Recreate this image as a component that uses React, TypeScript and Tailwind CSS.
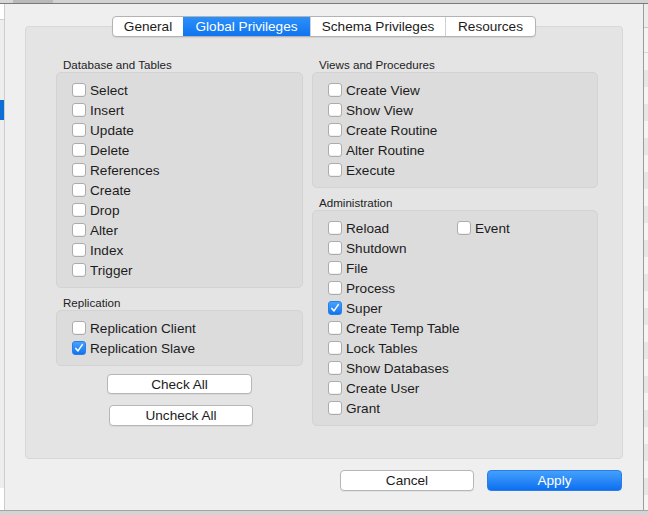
import React from 'react';

const dbTables = ['Select', 'Insert', 'Update', 'Delete', 'References', 'Create', 'Drop', 'Alter', 'Index', 'Trigger'];
const viewsProcs = ['Create View', 'Show View', 'Create Routine', 'Alter Routine', 'Execute'];
const adminLeft = ['Reload', 'Shutdown', 'File', 'Process', 'Super', 'Create Temp Table', 'Lock Tables', 'Show Databases', 'Create User', 'Grant'];

const tabs = [
  { label: 'General', w: 'w-[70px]' },
  { label: 'Global Privileges', w: 'w-[127px]' },
  { label: 'Schema Privileges', w: 'w-[135px]' },
  { label: 'Resources', w: 'w-[90px]' },
];

const CheckBox: React.FC<{ checked?: boolean }> = ({ checked }) =>
  checked ? (
    <span className="flex h-[14px] w-[14px] shrink-0 items-center justify-center rounded-[3px] border border-[#2a7ee8] bg-gradient-to-b from-[#47a2fd] to-[#0f74f0]">
      <svg width="10" height="10" viewBox="0 0 10 10" fill="none">
        <path d="M1.8 5.4 L4 7.9 L8.3 1.6" stroke="white" strokeWidth="1.5" strokeLinecap="round" strokeLinejoin="round" />
      </svg>
    </span>
  ) : (
    <span className="h-[14px] w-[14px] shrink-0 rounded-[3px] border border-[#acacac] bg-white shadow-[inset_0_-1px_0_#f0f0f0]" />
  );

const Item: React.FC<{ label: string; checked?: boolean }> = ({ label, checked }) => (
  <div className="flex h-[20px] items-center gap-[4px] whitespace-nowrap text-[13.6px] text-[#1c1c1c]">
    <CheckBox checked={checked} />
    <span className="mt-[2px] leading-[18px]">{label}</span>
  </div>
);

const Group: React.FC<{ title: string; children: React.ReactNode }> = ({ title, children }) => (
  <div className="flex flex-col">
    <div className="h-[14px] pl-[7px] text-[11.6px] leading-[14px] text-[#222]">{title}</div>
    <div className="rounded-[5px] border border-[#d3d3d3] bg-[#dcdcdc] pb-[7px] pl-[15px] pt-[7px]">{children}</div>
  </div>
);

const PlainButton: React.FC<{ label: string; className?: string }> = ({ label, className }) => (
  <div
    className={`flex h-[20px] items-center justify-center rounded-[4px] border border-[#b6b6b6] bg-white pt-[2px] text-[13.6px] text-[#1c1c1c] shadow-[0_1px_0_rgba(0,0,0,0.05)] ${className ?? ''}`}
  >
    {label}
  </div>
);

export default function App() {
  return (
    <div className="flex h-[515px] w-[648px] flex-col overflow-hidden bg-[#d3d3d3] font-['Liberation_Sans',Arial,sans-serif]">
      {/* window title area behind the sheet */}
      <div className="flex h-[3px] shrink-0">
        <div className="w-[13px] bg-[#d6d6d6]" />
        <div className="w-[40px] bg-[#b9b9b9]" />
        <div className="flex-1 bg-[#d2d2d2]" />
      </div>
      <div className="h-px shrink-0 bg-[#7a7a7a]" />

      <div className="flex h-[506px] shrink-0">
        {/* left edge of the window behind */}
        <div className="flex w-[4px] shrink-0 flex-col bg-[#ededed]">
          <div className="h-[16px] border-b border-[#d0d0d0] bg-white" />
          <div className="h-[80px]" />
          <div className="h-[20px] bg-[#0f6dd6]" />
          <div className="flex-1" />
          <div className="h-[22px] bg-white" />
        </div>

        {/* sheet */}
        <div className="flex w-[640px] shrink-0 flex-col border-l border-r border-l-[#cdcdcd] border-r-[#9c9c9c] bg-[#efefef] px-[20px] pt-[22px]">
          <div className="flex h-[433px] flex-col rounded-[4px] border border-[#d8d8d8] bg-[#e4e4e4]">
            <div className="-mt-[11px] flex justify-center">
              <div className="flex h-[21px] overflow-hidden rounded-[4px] border border-[#b3b3b3] bg-white shadow-[0_1px_1px_rgba(0,0,0,0.08)]">
                {tabs.map((t, i) => (
                  <div
                    key={t.label}
                    className={`flex items-center justify-center pt-[2px] text-[13.6px] ${t.w} ${
                      i === 1
                        ? 'bg-gradient-to-b from-[#2b90f9] to-[#0f74ee] text-white'
                        : 'text-[#1c1c1c]'
                    } ${i > 1 ? 'border-l border-[#d0d0d0]' : ''}`}
                  >
                    {t.label}
                  </div>
                ))}
              </div>
            </div>

            <div className="mt-[21px] flex gap-[9px] pl-[30px] pr-[23px]">
              <div className="flex w-[247px] flex-col">
                <Group title="Database and Tables">
                  {dbTables.map((l) => (
                    <Item key={l} label={l} />
                  ))}
                </Group>
                <div className="mt-[8px]">
                  <Group title="Replication">
                    <Item label="Replication Client" />
                    <Item label="Replication Slave" checked />
                  </Group>
                </div>
                <div className="mt-[8px] flex flex-col items-center">
                  <PlainButton label="Check All" className="w-[145px]" />
                  <PlainButton label="Uncheck All" className="ml-[3px] mt-[11px] h-[21px] w-[144px]" />
                </div>
              </div>

              <div className="flex w-[286px] flex-col">
                <Group title="Views and Procedures">
                  {viewsProcs.map((l) => (
                    <Item key={l} label={l} />
                  ))}
                </Group>
                <div className="mt-[8px]">
                  <Group title="Administration">
                    <div className="grid grid-cols-[129px_1fr]">
                      <div>
                        {adminLeft.map((l) => (
                          <Item key={l} label={l} checked={l === 'Super'} />
                        ))}
                      </div>
                      <div>
                        <Item label="Event" />
                      </div>
                    </div>
                  </Group>
                </div>
              </div>
            </div>
          </div>

          <div className="mr-[1px] mt-[11px] flex justify-end gap-[13px]">
            <PlainButton label="Cancel" className="h-[21px] w-[134px]" />
            <div className="flex h-[21px] w-[135px] items-center justify-center rounded-[4px] border border-[#2c7ee6] bg-gradient-to-b from-[#43a0fd] to-[#0a6ff0] pt-[2px] text-[13.6px] text-white">
              Apply
            </div>
          </div>
        </div>

        {/* right edge: table behind the sheet */}
        <div className="flex w-[4px] shrink-0 flex-col bg-[#f3f3f3]">
          <div className="h-[24px] border-b border-[#c9c9c9] bg-[#ececec]" />
          <div className="h-[25px] border-b border-[#d6d6d6]" />
          <div className="flex-1 bg-[repeating-linear-gradient(180deg,#f4f4f4_0px,#f4f4f4_17px,#e6e6e6_17px,#e6e6e6_34px)]" />
        </div>
      </div>

      <div className="h-px shrink-0 bg-[#a5a5a5]" />
      <div className="flex-1 bg-[#d4d4d4]" />
    </div>
  );
}
